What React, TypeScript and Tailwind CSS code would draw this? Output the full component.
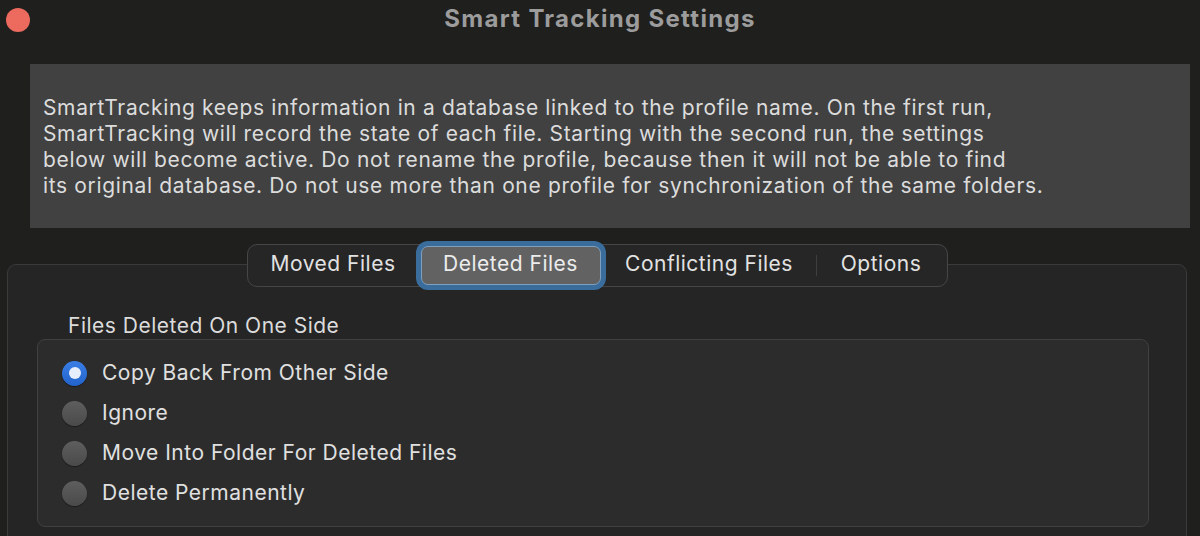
import { useState } from 'react'

const tabs = [
  { label: 'Moved Files', width: 'w-[171px]' },
  { label: 'Deleted Files', width: 'w-[184px]' },
  { label: 'Conflicting Files', width: 'w-[213px]' },
  { label: 'Options', width: 'w-[131px]' },
]

const choices = [
  'Copy Back From Other Side',
  'Ignore',
  'Move Into Folder For Deleted Files',
  'Delete Permanently',
]

function Radio({ checked }: { checked: boolean }) {
  return checked ? (
    <span className="flex h-[25px] w-[25px] shrink-0 items-center justify-center rounded-full bg-gradient-to-b from-[#3a7ee6] to-[#2263cc] shadow-[0_1px_1px_rgba(0,0,0,0.4)]">
      <span className="h-[12px] w-[12px] rounded-full bg-[#e6eefc]" />
    </span>
  ) : (
    <span className="h-[25px] w-[25px] shrink-0 rounded-full bg-gradient-to-b from-[#5e5e5e] to-[#4a4a4a] shadow-[0_1px_1px_rgba(0,0,0,0.4)]" />
  )
}

export default function App() {
  const [tab, setTab] = useState(1)
  const [choice, setChoice] = useState(0)

  return (
    <div className="flex h-[536px] w-[1200px] flex-col overflow-hidden bg-[#1f1f1e] font-['Inter','Liberation_Sans',sans-serif] text-[#dedede]">
      {/* Title bar */}
      <div className="grid h-[38px] shrink-0 grid-cols-[1fr_auto_1fr] items-center">
        <div className="pl-[6px] pt-[2px]">
          <span className="block h-[24px] w-[24px] rounded-full bg-[#ec6a5e]" />
        </div>
        <h1 className="text-[24px] font-bold tracking-[1.3px] text-[#9c9c9c]">Smart Tracking Settings</h1>
        <div />
      </div>

      {/* Info box */}
      <div className="mt-[26px] ml-[30px] mr-[10px] h-[164px] shrink-0 bg-[#414141] pl-[13px] pt-[31px] text-[21px] leading-[26px] tracking-[0.65px] text-[#dcdcdc]">
        <p>
          SmartTracking keeps information in a database linked to the profile name. On the first run,
          <br />
          SmartTracking will record the state of each file. Starting with the second run, the settings
          <br />
          below will become active. Do not rename the profile, because then it will not be able to find
          <br />
          its original database. Do not use more than one profile for synchronization of the same folders.
        </p>
      </div>

      {/* Tab panel */}
      <div className="mt-[36px] ml-[7px] mr-[13px] shrink-0 rounded-[9px] border border-[#3a3a3a] bg-[#252525] pb-[40px]">
        <div className="-mt-[21px] flex justify-center">
          <div className="flex h-[43px] items-center rounded-[10px] border border-[#464646] bg-[#262626]">
            {tabs.map((t, i) => {
              const active = i === tab
              const showSep = i > 0 && i !== tab && i - 1 !== tab
              return (
                <div key={t.label} className={`relative flex h-full items-center ${t.width}`}>
                  {showSep && <span className="absolute left-0 top-[10px] h-[21px] w-px bg-[#3e3e3e]" />}
                  <button
                    onClick={() => setTab(i)}
                    className={`mx-[2px] flex h-[39px] flex-1 items-center justify-center rounded-[7px] pb-[3px] text-[21px] tracking-[0.5px] ${
                      active
                        ? 'border border-[#7e9fbd] bg-[#626262] text-[#ececec] shadow-[0_0_0_5px_#3a6c9c]'
                        : 'text-[#e2e2e2]'
                    }`}
                  >
                    {t.label}
                  </button>
                </div>
              )
            })}
          </div>
        </div>

        <div className="mt-[27px] pl-[60px] text-[21px] leading-[24px] tracking-[0.5px] text-[#dcdcdc]">
          Files Deleted On One Side
        </div>

        <div className="mt-[1px] ml-[29px] mr-[37px] rounded-[8px] border border-[#404040] bg-[#2c2c2c] py-[13px] pl-[24px]">
          {choices.map((c, i) => (
            <label
              key={c}
              onClick={() => setChoice(i)}
              className="flex h-[40px] cursor-default items-center gap-[15px] text-[21px] tracking-[0.5px] text-[#e0e0e0]"
            >
              <Radio checked={i === choice} />
              <span>{c}</span>
            </label>
          ))}
        </div>
      </div>
    </div>
  )
}
